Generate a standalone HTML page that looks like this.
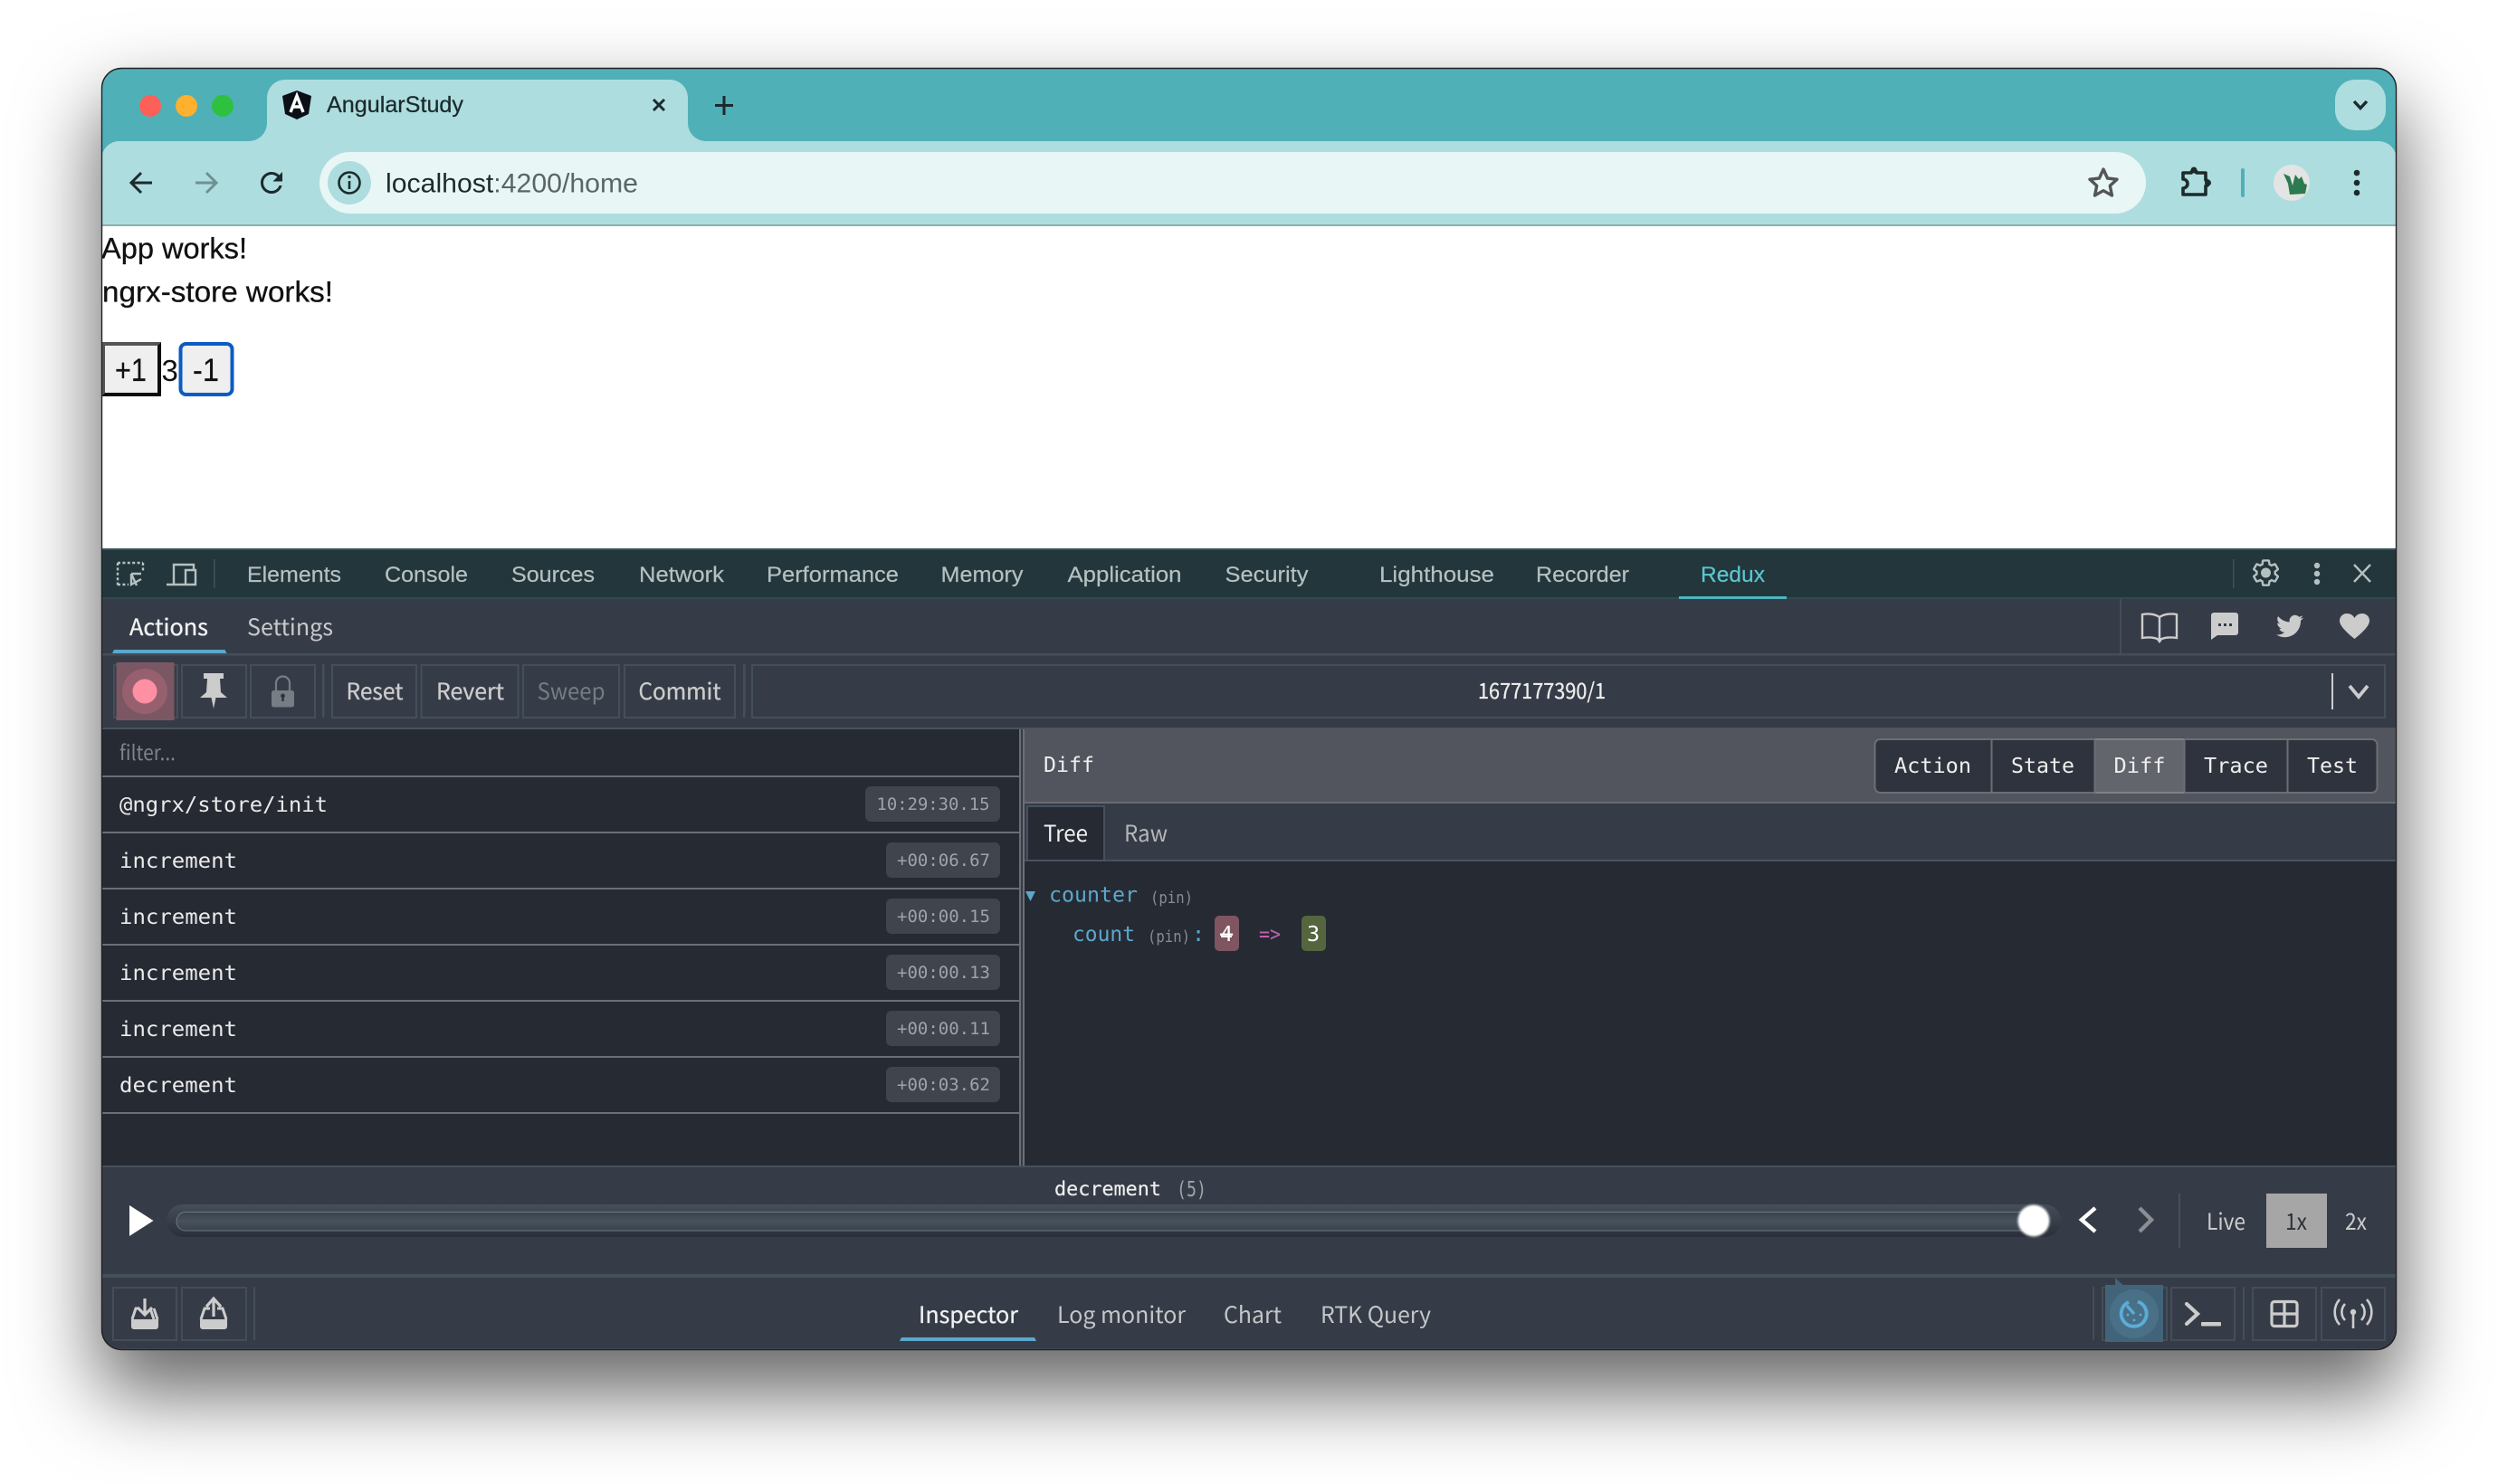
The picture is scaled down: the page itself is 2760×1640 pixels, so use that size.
<!DOCTYPE html>
<html><head><meta charset="utf-8"><style>
html,body{margin:0;padding:0;width:2760px;height:1640px;background:#fff;overflow:hidden}
#win{position:absolute;left:112px;top:75px;width:2536px;height:1417px;border-radius:22px;background:#363c47;box-shadow:0 44px 88px 4px rgba(0,0,0,.6)}
svg{position:absolute;left:0;top:0}
text{white-space:pre}
.l{font-family:"Liberation Sans",sans-serif}
.n{font-family:"Noto Sans CJK JP","Liberation Sans",sans-serif}
.m{font-family:"DejaVu Sans Mono","Liberation Mono",monospace}
</style></head><body><div id="win"></div>
<svg width="2760" height="1640" viewBox="0 0 2760 1640" xmlns="http://www.w3.org/2000/svg">
<defs><clipPath id="c"><rect x="112" y="75" width="2536" height="1417" rx="22"/></clipPath>
<linearGradient id="t1" x1="0" y1="0" x2="0" y2="1"><stop offset="0" stop-color="#444f5a"/><stop offset="1" stop-color="#2b2f39"/></linearGradient>
<linearGradient id="t2" x1="0" y1="0" x2="0" y2="1"><stop offset="0" stop-color="#38424c"/><stop offset=".5" stop-color="#47525d"/><stop offset="1" stop-color="#38424c"/></linearGradient>
<filter id="b" x="-30%" y="-30%" width="160%" height="160%"><feGaussianBlur stdDeviation="1.4"/></filter>
</defs>
<g clip-path="url(#c)">
<!-- chrome -->
<rect x="112" y="75" width="2536" height="85" fill="#50b0b8"/>
<rect x="112" y="156" width="2536" height="92" rx="0" fill="#aedddf"/>
<path d="M112 156V176A20 20 0 0 1 132 156Z" fill="#50b0b8"/>
<path d="M2648 156V176A20 20 0 0 0 2628 156Z" fill="#50b0b8"/>
<path d="M275 156A20 20 0 0 0 295 136V108A20 20 0 0 1 315 88H740A20 20 0 0 1 760 108V136A20 20 0 0 0 780 156Z" fill="#aedddf"/>
<rect x="112" y="248" width="2536" height="2" fill="#8eb0b0"/>
<circle cx="166" cy="117" r="12" fill="#fe5f57"/><circle cx="206" cy="117" r="12" fill="#ffb02e"/><circle cx="246" cy="117" r="12" fill="#2dc13f"/>
<path d="M328 100L344 106L341 126L328 132L315 126L312 106Z" fill="#0a1016"/>
<path d="M321 124L328 106L335 124M323.500 118H332.500" fill="none" stroke="#fff" stroke-width="3.4"/>
<text x="361" y="124" class="l" font-size="25" fill="#1b2a2c" stroke="#1b2a2c" stroke-width=".25" textLength="151" lengthAdjust="spacingAndGlyphs">AngularStudy</text>
<path d="M722 110L734 122M734 110L722 122" stroke="#1b2a2c" stroke-width="3" fill="none"/>
<path d="M800 106V127M790 116.500H810" stroke="#1b2a2c" stroke-width="3" fill="none"/>
<rect x="2580" y="88" width="56" height="56" rx="22" fill="#aedddf"/>
<path d="M2601 112L2608 119.500L2615 112" fill="none" stroke="#1b2a2c" stroke-width="3.400"/>
<path d="M156 191L145 202L156 213M145 202H168" fill="none" stroke="#1c2b2c" stroke-width="3"/>
<path d="M228 191L239 202L228 213M216 202H239" fill="none" stroke="#6f9093" stroke-width="3"/>
<path transform="translate(282 184) scale(1.5)" fill="#1c2b2c" d="M17.65 6.35A7.958 7.958 0 0 0 12 4c-4.42 0-7.99 3.58-7.99 8s3.57 8 7.99 8c3.73 0 6.84-2.55 7.73-6h-2.08A5.99 5.99 0 0 1 12 18c-3.31 0-6-2.690-6-6s2.690-6 6-6c1.660 0 3.140.69 4.220 1.780L13 11h7V4l-2.350 2.350z"/>
<rect x="353" y="168" width="2018" height="68" rx="34" fill="#e8f6f6"/>
<circle cx="386" cy="202" r="24" fill="#aedddf"/>
<circle cx="386" cy="202" r="11.500" fill="none" stroke="#1c2b2c" stroke-width="2.600"/>
<path d="M386 200V209" stroke="#1c2b2c" stroke-width="2.600"/><circle cx="386" cy="195.500" r="1.700" fill="#1c2b2c"/>
<text x="426" y="212.500" class="l" font-size="29.500" fill="#1c2b2c" textLength="279" lengthAdjust="spacingAndGlyphs">localhost<tspan fill="#5a6566">:4200/home</tspan></text>
<path d="M2324 187L2328.500 197L2339 198.200L2331.300 205.300L2333.500 216L2324 210.700L2314.500 216L2316.700 205.300L2309 198.200L2319.500 197Z" fill="none" stroke="#555" stroke-width="3.400" stroke-linejoin="round"/>
<path d="M2412 191H2421A3 3 0 0 1 2427 191H2437V199A3.200 3.200 0 0 1 2437 205.500V215H2412V208A5 5 0 0 0 2412 198Z" fill="none" stroke="#1c2b2c" stroke-width="3.600" stroke-linejoin="round"/>
<circle cx="2424" cy="188" r="3.500" fill="#1c2b2c"/><circle cx="2439.500" cy="202" r="3.500" fill="#1c2b2c"/>
<rect x="2476" y="186" width="4" height="32" rx="2" fill="#50b0b8"/>
<ellipse cx="2532" cy="202" rx="20" ry="20" fill="#e4e4e4"/>
<path d="M2523 192L2530 195L2533 205L2536 193L2540 198L2543 195L2546 203L2549 204L2547 214L2530 215L2528 203Z" fill="#2c7a4f"/>
<circle cx="2604" cy="191" r="3.300" fill="#1c2b2c"/><circle cx="2604" cy="202" r="3.300" fill="#1c2b2c"/><circle cx="2604" cy="213" r="3.300" fill="#1c2b2c"/>
<!-- page -->
<rect x="112" y="250" width="2536" height="356" fill="#fff"/>
<text x="112" y="285.500" class="l" font-size="32" fill="#111" stroke="#111" stroke-width=".3" textLength="161" lengthAdjust="spacingAndGlyphs">App works!</text>
<text x="113" y="333.500" class="l" font-size="32" fill="#111" stroke="#111" stroke-width=".3" textLength="255" lengthAdjust="spacingAndGlyphs">ngrx-store works!</text>
<rect x="112" y="378" width="66" height="60" fill="#efefef"/>
<path d="M112 378H178L174 382H116V434L112 438Z" fill="#555"/><path d="M178 378V438H112L116 434H174V382Z" fill="#0d0d0d"/>
<text x="127" y="421" class="l" font-size="35" fill="#111" stroke="#111" stroke-width=".2" textLength="35" lengthAdjust="spacingAndGlyphs">+1</text>
<text x="178.500" y="421" class="l" font-size="33" fill="#111">3</text>
<rect x="199.500" y="380" width="57" height="56" rx="6" fill="#efefef" stroke="#0a5cc4" stroke-width="4"/>
<text x="213" y="421" class="l" font-size="35" fill="#111" stroke="#111" stroke-width=".2" textLength="29" lengthAdjust="spacingAndGlyphs">-1</text>
<!-- devtools tabs -->
<rect x="112" y="606" width="2536" height="56" fill="#23363b"/>
<rect x="112" y="606" width="2536" height="2" fill="#35555a"/>
<rect x="112" y="660" width="2536" height="2" fill="#2f4a50"/>
<g fill="none" stroke="#b5c1c1" stroke-width="2.400">
<path d="M130 622H158M130 622V648M158 622V632" stroke-dasharray="3 2.400"/><path d="M130 646H142" stroke-dasharray="3 2.400"/>
<path d="M145 634L151 647M145 634H156M145 634V646L156 640"/>
<path d="M205 646H184M192 646V624H214V630M205 630H216V646H205Z"/>
</g>
<rect x="236" y="618" width="1.500" height="32" fill="#3e5358"/>
<g class="l" font-size="24.500" fill="#b5c1c1" stroke="#b5c1c1" stroke-width=".2">
<text x="273" y="643" textLength="104" lengthAdjust="spacingAndGlyphs">Elements</text>
<text x="425" y="643" textLength="92" lengthAdjust="spacingAndGlyphs">Console</text>
<text x="565" y="643" textLength="92" lengthAdjust="spacingAndGlyphs">Sources</text>
<text x="706" y="643" textLength="94" lengthAdjust="spacingAndGlyphs">Network</text>
<text x="847" y="643" textLength="146" lengthAdjust="spacingAndGlyphs">Performance</text>
<text x="1039.500" y="643" textLength="91" lengthAdjust="spacingAndGlyphs">Memory</text>
<text x="1179.500" y="643" textLength="126" lengthAdjust="spacingAndGlyphs">Application</text>
<text x="1353.500" y="643" textLength="92" lengthAdjust="spacingAndGlyphs">Security</text>
<text x="1524" y="643" textLength="127" lengthAdjust="spacingAndGlyphs">Lighthouse</text>
<text x="1697" y="643" textLength="103" lengthAdjust="spacingAndGlyphs">Recorder</text>
<text x="1879" y="643" fill="#5cc6d0" stroke="#5cc6d0" textLength="71" lengthAdjust="spacingAndGlyphs">Redux</text>
</g>
<rect x="1855" y="659" width="119" height="3" fill="#4fb6c0"/>
<rect x="2467" y="618" width="1.500" height="32" fill="#3e5358"/>
<path transform="translate(2486.500 616) scale(1.420)" fill="none" stroke="#b5c1c1" stroke-width="1.700" d="M19.140 12.940c.04-.3.06-.61.06-.94 0-.32-.02-.64-.07-.94l2.030-1.580c.18-.14.23-.41.12-.61l-1.920-3.320c-.12-.22-.37-.29-.59-.22l-2.390.96c-.5-.38-1.030-.7-1.620-.94l-.36-2.540c-.04-.24-.24-.41-.48-.41h-3.840c-.24 0-.43.17-.47.41l-.36 2.540c-.59.24-1.130.57-1.620.94l-2.390-.96c-.22-.08-.47 0-.59.22L2.740 8.870c-.12.21-.08.47.12.61l2.030 1.580c-.05.3-.09.63-.09.94s.02.64.07.94l-2.030 1.580c-.18.14-.23.41-.12.61l1.920 3.320c.12.22.37.29.59.22l2.390-.96c.5.38 1.030.7 1.620.94l.36 2.540c.05.24.24.41.48.41h3.840c.24 0 .44-.17.47-.41l.36-2.540c.59-.24 1.130-.56 1.620-.94l2.390.96c.22.08.47 0 .59-.22l1.920-3.320c.12-.22.07-.47-.12-.61l-2.010-1.580z"/>
<circle cx="2503.500" cy="633" r="5.500" fill="#b5c1c1"/>
<circle cx="2560" cy="625" r="3.200" fill="#b5c1c1"/><circle cx="2560" cy="634" r="3.200" fill="#b5c1c1"/><circle cx="2560" cy="643" r="3.200" fill="#b5c1c1"/>
<path d="M2601 624L2619 643M2619 624L2601 643" stroke="#b5c1c1" stroke-width="2.400" fill="none"/>
<!-- row 2 -->
<rect x="112" y="662" width="2536" height="828" fill="#363c47"/>
<rect x="112" y="722" width="2536" height="2.500" fill="#434e59"/>
<text x="143" y="702" class="n" font-size="25" fill="#f2f2f2" stroke="#f2f2f2" stroke-width=".35" textLength="87" lengthAdjust="spacingAndGlyphs">Actions</text>
<text x="273" y="702" class="n" font-size="25" fill="#c8cacc" textLength="95" lengthAdjust="spacingAndGlyphs">Settings</text>
<path d="M124 722L126 718H248.500L250.500 722Z" fill="#5ba8cc"/>
<rect x="2342" y="662" width="2" height="60" fill="#434e59"/>
<path d="M2386 682C2380 678 2373 678 2367 679V705C2373 704 2380 704 2386 707C2392 704 2399 704 2405 705V679C2399 678 2392 678 2386 682ZM2386 682V707" fill="none" stroke="#ccc" stroke-width="2.400"/>
<path d="M2383 707L2386 711L2389 707" fill="#ccc"/>
<path d="M2446 677H2470A3 3 0 0 1 2473 680V699A3 3 0 0 1 2470 702H2450L2443 707V680A3 3 0 0 1 2446 677Z" fill="#ccc"/>
<path d="M2451 689h3v3h-3zM2457 689h3v3h-3zM2463 689h3v3h-3z" fill="#363c47"/>
<path transform="translate(2515 677) scale(1.250)" fill="#ccc" d="M23.953 4.570a10 10 0 01-2.825.775 4.958 4.958 0 002.163-2.723c-.951.555-2.005.959-3.127 1.184a4.920 4.920 0 00-8.384 4.482C7.690 8.095 4.067 6.130 1.640 3.162a4.822 4.822 0 00-.666 2.475c0 1.710.870 3.213 2.188 4.096a4.904 4.904 0 01-2.228-.616v.06a4.923 4.923 0 003.946 4.827 4.996 4.996 0 01-2.212.085 4.936 4.936 0 004.604 3.417 9.867 9.867 0 01-6.102 2.105c-.39 0-.779-.023-1.170-.067a13.995 13.995 0 007.557 2.209c9.053 0 13.998-7.496 13.998-13.985 0-.21 0-.42-.015-.63A9.935 9.935 0 0024 4.590z"/>
<path d="M2601.500 706C2594 700 2585 692 2585 686C2585 681 2589 678 2593 678C2597 678 2600 680 2601.500 683C2603 680 2606 678 2610 678C2614 678 2618 681 2618 686C2618 692 2609 700 2601.500 706Z" fill="#ccc"/>
<!-- toolbar -->
<g fill="none" stroke="#444f5a" stroke-width="2">
<rect x="126" y="735" width="70" height="58"/><rect x="201" y="735" width="71" height="58"/><rect x="277" y="735" width="71" height="58"/>
<rect x="367" y="735" width="93" height="58"/><rect x="465.500" y="735" width="107" height="58"/><rect x="578" y="735" width="106" height="58"/><rect x="690" y="735" width="122" height="58"/>
<rect x="831" y="735" width="1804" height="58"/>
</g>
<rect x="356" y="734" width="2.500" height="59" fill="#444f5a"/><rect x="821" y="734" width="2.500" height="59" fill="#444f5a"/>
<rect x="128.500" y="732" width="64" height="64" fill="#7a5763"/>
<ellipse cx="160" cy="764" rx="25" ry="25" fill="#97606f"/>
<ellipse cx="160" cy="764" rx="13.500" ry="13.500" fill="#ff8fa3"/>
<path d="M225 744H247V750H243L244 765L251 771H238.500L236 783L233.500 771H221L228 765L229 750H225Z" fill="#ccc"/>
<path d="M305 764V755A7 7 0 0 1 320 755V764" fill="none" stroke="#777d85" stroke-width="2.200"/>
<rect x="300" y="763" width="25" height="18.500" rx="2.500" fill="#777d85"/>
<path d="M312.500 769V775" stroke="#2f343d" stroke-width="2.500"/><circle cx="312.500" cy="769" r="2.400" fill="#2f343d"/>
<g class="n" font-size="25" fill="#ccc" stroke="#ccc" stroke-width=".3">
<text x="382.500" y="773" textLength="63" lengthAdjust="spacingAndGlyphs">Reset</text>
<text x="482" y="773" textLength="75" lengthAdjust="spacingAndGlyphs">Revert</text>
<text x="593.500" y="773" fill="#777b82" stroke="none" textLength="75" lengthAdjust="spacingAndGlyphs">Sweep</text>
<text x="705.500" y="773" textLength="91" lengthAdjust="spacingAndGlyphs">Commit</text>
<text x="1633" y="772" fill="#eee" stroke="#eee" font-size="24" textLength="141" lengthAdjust="spacingAndGlyphs">1677177390/1</text>
</g>
<rect x="2576" y="744" width="2" height="40" fill="#ccc"/>
<path d="M2596 758L2606 770L2616 758" fill="none" stroke="#ccc" stroke-width="3.800"/>
<rect x="112" y="804" width="2536" height="2.500" fill="#4a525d"/>
<!-- left pane -->
<rect x="112" y="806" width="1014.500" height="483" fill="#262a33"/>
<text x="132" y="840" class="n" font-size="23" fill="#808388" textLength="62" lengthAdjust="spacingAndGlyphs">filter...</text>
<g fill="#6b6f75">
<rect x="112" y="857" width="1014" height="2"/><rect x="112" y="919" width="1014" height="2"/><rect x="112" y="981" width="1014" height="2"/><rect x="112" y="1043" width="1014" height="2"/><rect x="112" y="1105" width="1014" height="2"/><rect x="112" y="1167" width="1014" height="2"/><rect x="112" y="1229" width="1014" height="2"/>
</g>
<g class="m" font-size="23.500" fill="#eaeaea">
<text x="132" y="897" textLength="230" lengthAdjust="spacingAndGlyphs">@ngrx/store/init</text>
<text x="132" y="959" textLength="130" lengthAdjust="spacingAndGlyphs">increment</text>
<text x="132" y="1021" textLength="130" lengthAdjust="spacingAndGlyphs">increment</text>
<text x="132" y="1083" textLength="130" lengthAdjust="spacingAndGlyphs">increment</text>
<text x="132" y="1145" textLength="130" lengthAdjust="spacingAndGlyphs">increment</text>
<text x="132" y="1207" textLength="130" lengthAdjust="spacingAndGlyphs">decrement</text>
</g>
<g fill="#3f444d">
<rect x="956" y="869" width="149" height="39" rx="6"/><rect x="979" y="931" width="126" height="39" rx="6"/><rect x="979" y="993" width="126" height="39" rx="6"/><rect x="979" y="1055" width="126" height="39" rx="6"/><rect x="979" y="1117" width="126" height="39" rx="6"/><rect x="979" y="1179" width="126" height="39" rx="6"/>
</g>
<g class="m" font-size="19" fill="#a0a3a8">
<text x="968.500" y="895" textLength="125" lengthAdjust="spacingAndGlyphs">10:29:30.15</text>
<text x="991" y="957" textLength="103" lengthAdjust="spacingAndGlyphs">+00:06.67</text>
<text x="991" y="1019" textLength="103" lengthAdjust="spacingAndGlyphs">+00:00.15</text>
<text x="991" y="1081" textLength="103" lengthAdjust="spacingAndGlyphs">+00:00.13</text>
<text x="991" y="1143" textLength="103" lengthAdjust="spacingAndGlyphs">+00:00.11</text>
<text x="991" y="1205" textLength="103" lengthAdjust="spacingAndGlyphs">+00:03.62</text>
</g>
<rect x="1126" y="806" width="2" height="483" fill="#6b6f75"/>
<rect x="1128" y="806" width="2" height="483" fill="#363c47"/>
<rect x="1130" y="806" width="2" height="483" fill="#6b6f75"/>
<!-- right pane -->
<rect x="1132" y="805" width="1516" height="81" fill="#52555e"/>
<rect x="1132" y="886" width="1516" height="2" fill="#686b72"/>
<text x="1153" y="853" class="m" font-size="23.500" fill="#eee" textLength="56" lengthAdjust="spacingAndGlyphs">Diff</text>
<rect x="2071.500" y="817" width="555" height="59" rx="6" fill="#2f333d" stroke="#6b6f75" stroke-width="2"/>
<rect x="2314.500" y="816" width="98.500" height="61" fill="#63656c"/>
<path d="M2314.500 817H2413M2314.500 876H2413" stroke="#808287" stroke-width="2"/>
<g fill="#6b6f75"><rect x="2199.500" y="817" width="2" height="59"/><rect x="2313.500" y="817" width="2" height="59"/><rect x="2412.500" y="817" width="2" height="59"/><rect x="2526.500" y="817" width="2" height="59"/></g>
<g class="m" font-size="23.500" fill="#eee">
<text x="2093" y="854" textLength="85" lengthAdjust="spacingAndGlyphs">Action</text>
<text x="2222" y="854" textLength="70" lengthAdjust="spacingAndGlyphs">State</text>
<text x="2335.500" y="854" textLength="57" lengthAdjust="spacingAndGlyphs">Diff</text>
<text x="2435" y="854" textLength="71" lengthAdjust="spacingAndGlyphs">Trace</text>
<text x="2549" y="854" textLength="56" lengthAdjust="spacingAndGlyphs">Test</text>
</g>
<rect x="1132" y="888" width="1516" height="62" fill="#363c47"/>
<rect x="1132" y="950" width="1516" height="2" fill="#4a5360"/>
<path d="M1135 950V891H1220V950" fill="#262a33" stroke="#46505c" stroke-width="2"/>
<text x="1153" y="930" class="n" font-size="25" fill="#f0f0f0" textLength="49" lengthAdjust="spacingAndGlyphs">Tree</text>
<text x="1242" y="930" class="n" font-size="25" fill="#b4b6b8" textLength="48" lengthAdjust="spacingAndGlyphs">Raw</text>
<rect x="1132" y="952" width="1516" height="337" fill="#262a33"/>
<path d="M1133 985H1144L1138.500 996Z" fill="#5ba8cc"/>
<text x="1159" y="996.500" class="m" font-size="23.500" fill="#5ba8cc" textLength="98" lengthAdjust="spacingAndGlyphs">counter</text>
<text x="1271" y="998" class="m" font-size="18" fill="#898c90" textLength="47" lengthAdjust="spacingAndGlyphs">(pin)</text>
<text x="1185" y="1040" class="m" font-size="23.500" fill="#5ba8cc" textLength="69" lengthAdjust="spacingAndGlyphs">count</text>
<text x="1268" y="1041" class="m" font-size="18" fill="#898c90" textLength="47" lengthAdjust="spacingAndGlyphs">(pin)</text>
<text x="1317" y="1040" class="m" font-size="23.500" fill="#5ba8cc">:</text>
<rect x="1342" y="1012" width="27" height="39" rx="5" fill="#7f5560"/>
<text x="1348" y="1040" class="m" font-size="23.500" fill="#fff" text-decoration="line-through">4</text>
<text x="1391" y="1040" class="m" font-size="23.500" fill="#c060b0" textLength="24" lengthAdjust="spacingAndGlyphs">=&gt;</text>
<rect x="1438" y="1012" width="27" height="39" rx="5" fill="#55663f"/>
<text x="1444" y="1040" class="m" font-size="23.500" fill="#fff">3</text>
<!-- slider row -->
<rect x="112" y="1288" width="2536" height="2" fill="#46505c"/>
<text x="1165" y="1321" class="m" font-size="21.500" fill="#eee" stroke="#eee" stroke-width=".2" textLength="118" lengthAdjust="spacingAndGlyphs">decrement</text>
<text x="1300" y="1322" class="m" font-size="23.500" fill="#a0a3a8" textLength="33" lengthAdjust="spacingAndGlyphs">(5)</text>
<path d="M143 1332L169.500 1349L143 1366Z" fill="#fff"/>
<rect x="184" y="1331" width="2093" height="36" rx="18" fill="url(#t1)"/>
<rect x="195" y="1339.500" width="2050" height="20.500" rx="10" fill="url(#t2)" stroke="#6f767f" stroke-width="1"/>
<circle cx="2247" cy="1349" r="17.500" fill="#fff" filter="url(#b)"/>
<circle cx="2247" cy="1349" r="15.500" fill="#fff"/>
<path d="M2315 1335L2300 1348L2315 1361" fill="none" stroke="#fff" stroke-width="4.400"/>
<path d="M2364 1335L2377 1348L2364 1361" fill="none" stroke="#8b8e92" stroke-width="4.400"/>
<rect x="2407" y="1319" width="2" height="60" fill="#46505c"/>
<rect x="2504" y="1319" width="67" height="60" fill="#a6a6a6"/>
<g class="n" font-size="25">
<text x="2438" y="1359" fill="#ccc" textLength="43" lengthAdjust="spacingAndGlyphs">Live</text>
<text x="2525" y="1359" fill="#2b3039" textLength="24" lengthAdjust="spacingAndGlyphs">1x</text>
<text x="2591" y="1359" fill="#ccc" textLength="24" lengthAdjust="spacingAndGlyphs">2x</text>
</g>
<rect x="112" y="1408" width="2536" height="4" fill="#44505c"/>
<!-- bottom -->
<g fill="none" stroke="#434e59" stroke-width="2">
<rect x="125" y="1423" width="70" height="58"/><rect x="201" y="1423" width="71" height="58"/>
<rect x="2323" y="1423" width="71" height="58"/><rect x="2399" y="1423" width="70" height="58"/><rect x="2489" y="1423" width="70" height="58"/><rect x="2565" y="1423" width="70" height="58"/>
</g>
<rect x="280" y="1422" width="2" height="59" fill="#434e59"/><rect x="2312" y="1422" width="2" height="59" fill="#434e59"/><rect x="2478" y="1422" width="2" height="59" fill="#434e59"/>
<path d="M145 1458H175V1466A3 3 0 0 1 172 1469H148A3 3 0 0 1 145 1466Z" fill="#ccc"/>
<path d="M146 1458L150 1446H154M170 1458L166 1446" fill="none" stroke="#ccc" stroke-width="3"/>
<path d="M170 1446L174 1458" fill="none" stroke="#ccc" stroke-width="3"/>
<path d="M160 1435V1452M152 1445L160 1453L168 1445" fill="none" stroke="#ccc" stroke-width="3.200"/>
<path d="M221 1458H251V1466A3 3 0 0 1 248 1469H224A3 3 0 0 1 221 1466Z" fill="#ccc"/>
<path d="M222 1458L226 1446H232M250 1458L246 1446H240" fill="none" stroke="#ccc" stroke-width="3"/>
<path d="M236 1436V1455M228 1444L236 1435L244 1444" fill="none" stroke="#ccc" stroke-width="3.200"/>
<g class="n" font-size="25">
<text x="1015" y="1462" fill="#f0f0f0" stroke="#f0f0f0" stroke-width=".3" textLength="110" lengthAdjust="spacingAndGlyphs">Inspector</text>
<text x="1168" y="1462" fill="#c4c6c8" textLength="142" lengthAdjust="spacingAndGlyphs">Log monitor</text>
<text x="1352" y="1462" fill="#c4c6c8" textLength="64" lengthAdjust="spacingAndGlyphs">Chart</text>
<text x="1459" y="1462" fill="#c4c6c8" textLength="122" lengthAdjust="spacingAndGlyphs">RTK Query</text>
</g>
<path d="M994 1482L996 1478H1143L1145 1482Z" fill="#5ba8cc"/>
<rect x="2326" y="1420" width="64" height="63" fill="#41647a"/>
<path d="M2337 1412L2337 1426L2352 1426Z" fill="#41647a"/>
<circle cx="2358" cy="1452" r="27" fill="#4a7088"/>
<path d="M2352 1439A14 14 0 1 0 2362 1438.500" fill="none" stroke="#5badd8" stroke-width="3.800"/>
<path d="M2350 1443L2358 1452" stroke="#5badd8" stroke-width="3.200"/>
<circle cx="2358" cy="1459" r="1.400" fill="#5badd8"/><circle cx="2351" cy="1453" r="1.400" fill="#5badd8"/><circle cx="2365" cy="1453" r="1.400" fill="#5badd8"/>
<path d="M2416 1441L2428 1452L2416 1463" fill="none" stroke="#ccc" stroke-width="4.200" stroke-linecap="round"/>
<rect x="2432" y="1461" width="22" height="4.500" rx="1" fill="#ccc"/>
<rect x="2510" y="1438.500" width="28" height="27" rx="3" fill="none" stroke="#ccc" stroke-width="3.200"/>
<path d="M2524 1438V1466M2510 1452H2538" stroke="#ccc" stroke-width="3.200"/>
<circle cx="2600" cy="1450" r="3.200" fill="#ccc"/><path d="M2600 1450V1468" stroke="#ccc" stroke-width="2.600"/>
<path d="M2591 1441A13 13 0 0 0 2591 1459M2609 1441A13 13 0 0 1 2609 1459M2585 1436A21 21 0 0 0 2585 1464M2615 1436A21 21 0 0 1 2615 1464" fill="none" stroke="#ccc" stroke-width="2.600"/>
<rect x="112" y="1490" width="2536" height="2" fill="#4a525d"/>
</g>
<rect x="112.500" y="75.500" width="2535" height="1416" rx="22" fill="none" stroke="#222" stroke-width="1.400"/>
</svg>
</body></html>
